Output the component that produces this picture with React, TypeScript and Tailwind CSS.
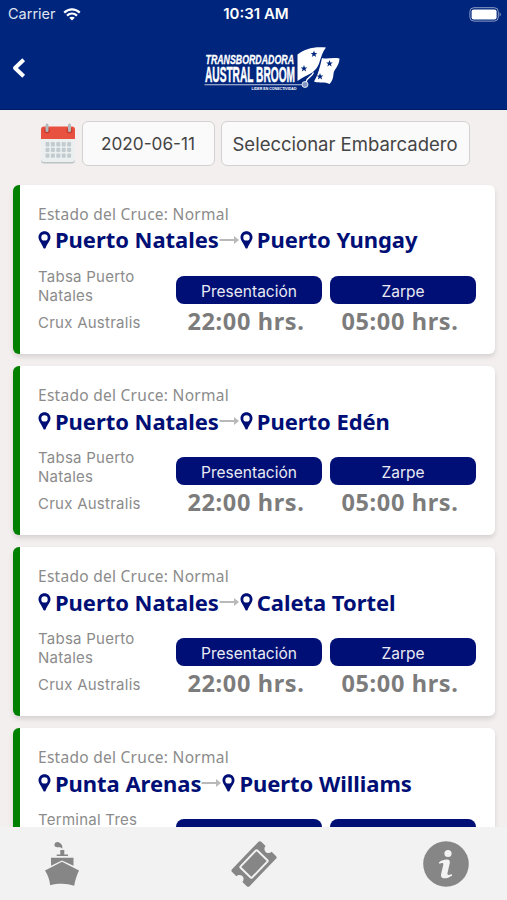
import { clsx } from "clsx";

type Crossing = {
  from: string;
  to: string;
  terminal: string;
  ship: string;
  checkIn: string;
  departure: string;
};

const crossings: Crossing[] = [
  { from: "Puerto Natales", to: "Puerto Yungay", terminal: "Tabsa Puerto Natales", ship: "Crux Australis", checkIn: "22:00 hrs.", departure: "05:00 hrs." },
  { from: "Puerto Natales", to: "Puerto Edén", terminal: "Tabsa Puerto Natales", ship: "Crux Australis", checkIn: "22:00 hrs.", departure: "05:00 hrs." },
  { from: "Puerto Natales", to: "Caleta Tortel", terminal: "Tabsa Puerto Natales", ship: "Crux Australis", checkIn: "22:00 hrs.", departure: "05:00 hrs." },
  { from: "Punta Arenas", to: "Puerto Williams", terminal: "Terminal Tres Puentes", ship: "Crux Australis", checkIn: "22:00 hrs.", departure: "05:00 hrs." },
];

function WifiIcon() {
  return (
    <svg width="18" height="13" viewBox="0 0 18 13" fill="none" stroke="white" strokeWidth="2.2">
      <path d="M1.2 4.6C5.7.3 12.3.3 16.8 4.6" />
      <path d="M4 7.6c2.9-2.7 7.1-2.7 10 0" />
      <path d="M9 12.6 6.2 9.8c1.6-1.4 4-1.4 5.6 0Z" fill="white" stroke="none" />
    </svg>
  );
}

function BatteryIcon() {
  return (
    <svg width="33" height="15" viewBox="0 0 33 15">
      <rect x="0.9" y="0.7" width="28.4" height="13.4" rx="4" fill="none" stroke="#8d9cc5" strokeWidth="1" />
      <rect x="2.6" y="2.4" width="25" height="10" rx="2.2" fill="white" />
      <path d="M30.6 5.2c1.6.7 1.6 3.7 0 4.4Z" fill="#8d9cc5" />
    </svg>
  );
}

function BrandLogo() {
  const star = "M0-3.400.9-1 3.400-1 1.400.600 2.200 3 0 1.600-2.200 3-1.400.600-3.400-1-.9-1Z";
  return (
    <svg width="140" height="48" viewBox="0 0 140 48" fill="white">
      <text x="4.500" y="18" fontFamily="Liberation Sans" fontSize="12" fontWeight="700" fontStyle="italic" stroke="white" strokeWidth=".3" textLength="88.500" lengthAdjust="spacingAndGlyphs">
        TRANSBORDADORA
      </text>
      <text x="4" y="36" fontFamily="Liberation Sans" fontSize="22.500" fontWeight="700" stroke="white" strokeWidth=".5" textLength="90" lengthAdjust="spacingAndGlyphs">
        AUSTRAL BROOM
      </text>
      <path d="M3.500 38.300H101v1H3.500Z" opacity=".75" />
      <text x="50.500" y="43.600" fontFamily="Liberation Sans" fontSize="3.600" fontWeight="700" textLength="45" lengthAdjust="spacingAndGlyphs">
        LIDER EN CONECTIVIDAD
      </text>
      <path d="M96.500 8.500C103 3 113 .3 125 1.500c-3.500 4.500-4.500 8.500-6 13-2 7-4.500 9.500-8.500 12.500-5 3-9.500 4.500-14 8Z" />
      <path d="M121 12c5 1.500 10.500-1 17.500.5-.5 8.500-5.500 10-6 15.500-.3 4.500-1.500 7.500-4 10-5-2.500-9-.3-15.500-2.500 4-6 6-15 8-23.500Z" />
      <path d="M105 36c1-5 6-5 7.500-9.500" fill="none" stroke="white" strokeWidth="1.300" />
      <circle cx="104" cy="38.500" r="3" fill="#8496c6" stroke="white" strokeWidth=".8" />
      {[[113, 8], [128.500, 17.500], [103, 22.500], [119, 30.500]].map(([x, y]) => (
        <path key={x} d={star} fill="#00257d" transform={`translate(${x} ${y})`} />
      ))}
    </svg>
  );
}

function CalendarIcon() {
  return (
    <svg width="36" height="42" viewBox="0 0 36 42">
      <path d="M1 14h34v23.500q0 3-3 3H4q-3 0-3-3Z" fill="#b9c4c3" />
      <path d="M1 14h34v22q0 3-3 3H4q-3 0-3-3Z" fill="#eceff0" />
      <path d="M1 6.500q0-3 3-3h28q3 0 3 3V16H1Z" fill="#e8503f" />
      {[7, 29.500].map((x) => (
        <g key={x}>
          <circle cx={x} cy="7.500" r="3" fill="#c83d31" />
          <rect x={x - 1.500} y="0.500" width="3" height="8.500" rx="1.500" fill="#b3b9bb" />
        </g>
      ))}
      {[19, 24.700, 30.400].map((y) =>
        [5.500, 10.900, 16.300, 21.700, 27.100].map((x) => (
          <rect key={`${x}-${y}`} x={x} y={y} width="4" height="4.400" rx="1" fill="#c2cbcf" />
        )),
      )}
    </svg>
  );
}

function PinIcon() {
  return (
    <svg width="13" height="18" viewBox="0 0 13 18" className="shrink-0">
      <path
        d="M6.500.3C2.900.3.5 3 .5 6.200c0 3.600 3.500 6.500 4.800 10.500.4 1.200 2 1.200 2.400 0 1.300-4 4.800-6.900 4.800-10.500C12.500 3 10.100.3 6.500.3Zm0 2.900a3.200 3.200 0 1 1 0 6.400 3.200 3.200 0 0 1 0-6.400Z"
        fill="#000f75"
        fillRule="evenodd"
      />
    </svg>
  );
}

function ArrowIcon() {
  return (
    <svg width="21" height="10" viewBox="0 0 21 10" className="shrink-0">
      <path d="M.5 4h14.500V1l5 4-5 4V6H.5Z" fill="#b9b9b9" />
    </svg>
  );
}

function ShipIcon() {
  return (
    <svg width="34" height="46" viewBox="0 0 34 46" fill="#868686">
      <path d="M9.500 3.500C10 .8 13 .5 15 2c1.500 1.200 2.800 2.500 2.300 5.800-1.500-1.800-2.800-1.700-4.500-1.500-2.200.2-3.700-1-3.300-2.800Z" />
      <path d="M15.300 9h4v4.400h3.700v1.700H11.700v-1.700h3.600ZM6 16.700h22.500v8L17 19.600 6 24.700Z" />
      <path d="M17 20.800 34 29.500c-2.200 4.500-3.800 9.500-4.800 15.200-4.200-1.200-7.900-2-12.200-2s-8 .3-11.800 1.500C4.500 39 3 34 0 29.500Z" />
    </svg>
  );
}

function TicketIcon() {
  return (
    <svg width="46" height="46" viewBox="0 0 46 46">
      <g transform="rotate(-46 23 23)">
        <path d="M4 10.800h38q2 0 2 2v6a4.200 4.200 0 0 0 0 8.400v6q0 2-2 2H4q-2 0-2-2v-6a4.200 4.200 0 0 0 0-8.400v-6q0-2 2-2Z" fill="#868686" />
        <rect x="11" y="15" width="24" height="16" rx="1" fill="none" stroke="#f2f2f2" strokeWidth="1.900" />
      </g>
    </svg>
  );
}

function InfoIcon() {
  return (
    <svg width="46" height="46" viewBox="0 0 46 46">
      <circle cx="23" cy="23" r="22.800" fill="#868686" />
      <circle cx="25" cy="12.500" r="3.600" fill="#f2f2f2" />
      <path d="M15.800 21.500c3-2.300 6-3.100 8.300-2.900 2.200.2 3.100 1.400 2.700 3.300l-2.300 10.200c-.4 1.900.8 2.500 4 .9l.7 1.400c-3.600 2.700-6.900 3.300-8.900 2.800-2-.5-2.700-2-2.200-4.200l2.200-9.200c.4-2-1-2.300-3.900-1Z" fill="#f2f2f2" />
    </svg>
  );
}

function TimeBlock({ label, time }: { label: string; time: string }) {
  return (
    <div className="w-[146px] text-center">
      <div className="flex h-7 items-center justify-center rounded-lg bg-[#000f75] pt-[3px] font-[Inter] text-[15.500px] text-[#e9eaf4]">
        {label}
      </div>
      <p className="mt-px pr-[6px] font-['Noto_Sans'] text-[23.500px] leading-8 font-bold tracking-[0.65px] text-[#7c7c7c]">{time}</p>
    </div>
  );
}

function CrossingCard({ crossing }: { crossing: Crossing }) {
  return (
    <article className="h-[169.200px] shrink-0 rounded-md border-l-[7px] border-[#008000] bg-white pt-[19.400px] pr-[19px] pl-[18px] shadow-[0_3px_5px_rgba(0,0,0,0.12)]">
      <p className="font-['Noto_Sans'] text-[15.500px] leading-5 tracking-[0.27px] text-[#8b8b8b]">Estado del Cruce: Normal</p>
      <h2 className="flex h-8 items-center font-['Noto_Sans'] text-[22px] font-bold tracking-[-0.05px] whitespace-nowrap text-[#000f75]">
        <PinIcon />
        <span className="ml-1">{crossing.from}</span>
        <ArrowIcon />
        <PinIcon />
        <span className="ml-1">{crossing.to}</span>
      </h2>
      <div className="mt-[11px] flex">
        <div className="w-[138px] font-[Inter] text-[15px] leading-[19px] tracking-[0.25px] text-[#8b8b8b]">
          <p className="w-[120px]">{crossing.terminal}</p>
          <p className="mt-2">{crossing.ship}</p>
        </div>
        <div className="flex gap-2 pt-[9px]">
          <TimeBlock label="Presentación" time={crossing.checkIn} />
          <TimeBlock label="Zarpe" time={crossing.departure} />
        </div>
      </div>
    </article>
  );
}

export default function App() {
  const control = "flex h-[45px] items-center justify-center rounded-md border border-[#d3d1d1] bg-[#fafafa] text-[#444] whitespace-nowrap";

  return (
    <div className="flex h-[900px] w-[507px] flex-col overflow-hidden bg-[#f4efef] font-[Inter]">
      <header className="h-[110px] shrink-0 border-b border-[#001a66] bg-[#00257d] text-white">
        <div className="grid h-7 grid-cols-3 items-center pr-[5px] pl-2 text-[15px]">
          <div className="flex items-center gap-[7px] text-[14.500px] text-[#dfe4f0]">
            <span>Carrier</span>
            <WifiIcon />
          </div>
          <span className="pl-0.5 text-center font-semibold">10:31 AM</span>
          <div className="flex justify-end">
            <BatteryIcon />
          </div>
        </div>
        <div className="flex h-[76px] items-center pt-1 pl-3">
          <button type="button" aria-label="Volver">
            <svg width="14" height="20" viewBox="0 0 14 20" fill="none" stroke="white" strokeWidth="4" strokeLinejoin="round">
              <path d="m11.700 1.800-8.700 8.200 8.700 8.200" />
            </svg>
          </button>
          <div className="mt-1 ml-[175px]">
            <BrandLogo />
          </div>
        </div>
      </header>

      <main className="flex min-h-0 flex-1 flex-col overflow-hidden">
        <div className="flex shrink-0 items-center gap-[6px] pt-[11px] pl-[39.500px]">
          <CalendarIcon />
          <button type="button" className={clsx(control, "w-[133px] text-[17.200px]")}>2020-06-11</button>
          <button type="button" className={clsx(control, "w-[249px] pt-0.5 text-[18.500px]")}>Seleccionar Embarcadero</button>
        </div>
        <section className="mt-[18.500px] flex flex-col gap-3 pr-3 pl-[13px]">
          {crossings.map((crossing) => (
            <CrossingCard key={crossing.to} crossing={crossing} />
          ))}
        </section>
      </main>

      <nav className="z-10 flex h-[73px] shrink-0 items-center justify-between bg-[#f2f2f2] pr-[38px] pl-[45px]">
        <ShipIcon />
        <div className="pl-[6px]">
          <TicketIcon />
        </div>
        <InfoIcon />
      </nav>
    </div>
  );
}
